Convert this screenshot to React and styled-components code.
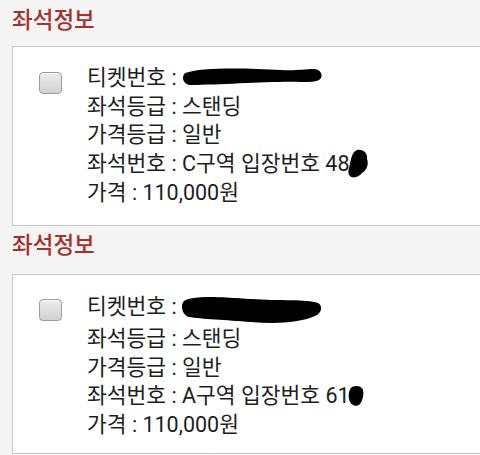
import React from "react";
import styled, { createGlobalStyle } from "styled-components";

const Global = createGlobalStyle`
  html, body { margin: 0; padding: 0; background: #f4f4f4; }
  body { font-family: Roboto, "Noto Sans CJK KR", sans-serif; }
`;

const Page = styled.div`
  width: 480px;
  height: 455px;
  overflow: hidden;
  padding: 3px 0 0 12px;
  box-sizing: border-box;
`;

const Title = styled.h2`
  margin: ${(p) => p.$mt || 0}px 0 0 0;
  font-size: 22.5px;
  line-height: 30px;
  font-weight: 500;
  color: #a8302a;
  font-family: "Noto Sans CJK KR", sans-serif;
`;

const Card = styled.div`
  margin-top: ${(p) => p.$mt}px;
  width: 520px;
  height: 180px;
  box-sizing: border-box;
  background: #fff;
  border: 1px solid #c9c9c9;
  display: flex;
  align-items: flex-start;
  padding: ${(p) => p.$pt}px 0 0 26px;
  gap: 25px;
`;

const Check = styled.span`
  flex: none;
  margin-top: 8px;
  width: 21px;
  height: 20px;
  border: 1px solid #9d9d9d;
  border-radius: 4px;
  background: linear-gradient(#ececec, #d2d2d2);
  box-shadow: inset 0 1px 0 #fafafa;
`;

const Lines = styled.div`
  display: flex;
  flex-direction: column;
`;

const Line = styled.div`
  font-size: 21.5px;
  line-height: 28.5px;
  color: #1e1e1e;
  white-space: nowrap;
`;

const Blob = styled.svg`
  display: inline-block;
  vertical-align: middle;
  margin-top: ${(p) => p.$mt || 0}px;
  margin-left: ${(p) => p.$ml || 0}px;
`;

const BigBlob1 = () => (
  <Blob width="142" height="22" viewBox="0 0 142 22" $mt={-6} $ml={-1}>
    <path
      d="M4 8 C20 2, 65 3, 100 5 C115 6, 124 4, 132 4 C139 4, 142 9, 140 13 C138 17, 130 17, 120 17 C90 16, 40 20, 10 20 C2 20, 0 12, 4 8 Z"
      fill="#000"
    />
  </Blob>
);

const BigBlob2 = () => (
  <Blob width="142" height="30" viewBox="0 0 142 30" $mt={4} $ml={-1}>
    <path
      d="M3 6 C12 0, 40 2, 70 4 C100 6, 125 4, 137 8 C142 11, 141 18, 134 21 C118 28, 95 29, 70 27 C45 25, 20 24, 8 22 C1 20, -1 10, 3 6 Z"
      fill="#000"
    />
  </Blob>
);

const Tail1 = () => (
  <Blob width="22" height="30" viewBox="0 0 22 30" $mt={-2} $ml={-3}>
    <path
      d="M10 1 C16 0, 21 4, 20 10 C22 15, 20 21, 15 24 C12 28, 6 30, 3 27 C0 24, 2 19, 3 15 C4 10, 5 3, 10 1 Z"
      fill="#000"
    />
  </Blob>
);

const Tail2 = () => (
  <Blob width="16" height="22" viewBox="0 0 16 22" $mt={-2} $ml={-2}>
    <path
      d="M4 2 C8 0, 14 1, 15 5 C16 9, 15 15, 12 19 C9 22, 4 21, 2 17 C0 13, 0 5, 4 2 Z"
      fill="#000"
    />
  </Blob>
);

const Section = ({ titleMt, cardMt, pt, big, zone, num, tail }) => (
  <>
    <Title $mt={titleMt}>좌석정보</Title>
    <Card $mt={cardMt} $pt={pt}>
      <Check />
      <Lines>
        <Line>
          티켓번호 : {big}
        </Line>
        <Line>좌석등급 : 스탠딩</Line>
        <Line>가격등급 : 일반</Line>
        <Line>
          좌석번호 : {zone}구역 입장번호 {num}
          {tail}
        </Line>
        <Line>가격 : 110,000원</Line>
      </Lines>
    </Card>
  </>
);

export default function App() {
  return (
    <Page>
      <Global />
      <Section titleMt={0} cardMt={13} pt={17} big={<BigBlob1 />} zone="C" num="48" tail={<Tail1 />} />
      <Section titleMt={2} cardMt={16} pt={16} big={<BigBlob2 />} zone="A" num="61" tail={<Tail2 />} />
    </Page>
  );
}
